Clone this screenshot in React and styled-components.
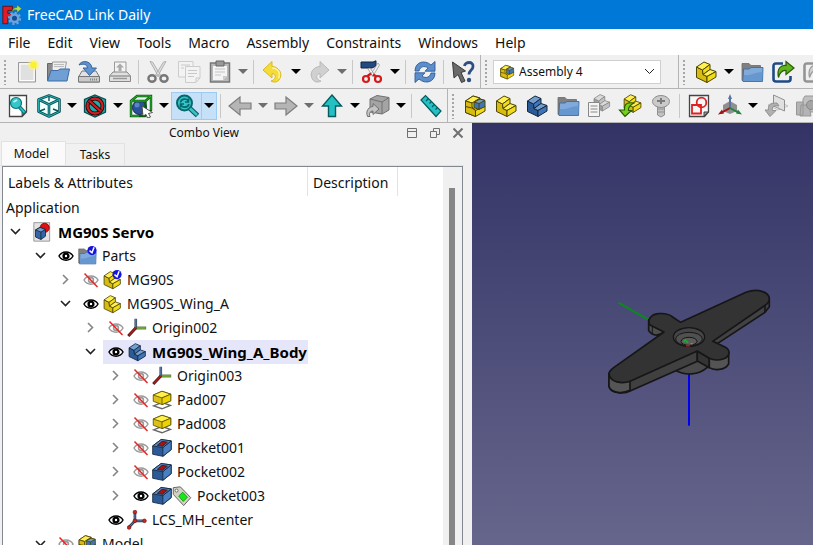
import React, { useState } from 'react';
import styled, { createGlobalStyle, css } from 'styled-components';

const GlobalStyle = createGlobalStyle`
  * { box-sizing: border-box; }
  body { margin: 0; }
  button, select { font: inherit; color: inherit; }
`;

/* ---------- icons ---------- */

const Icon = styled.svg.attrs({ viewBox: '0 0 24 24', 'aria-hidden': true })`
  display: block;
  flex: none;
  width: ${(p) => p.$size || 24}px;
  height: ${(p) => p.$size || 24}px;
`;

const yellow = { top: '#fff04f', left: '#d8bb10', right: '#f0da1c', line: '#4d4400' };
const blue = { top: '#729fcf', left: '#2b5a96', right: '#4076b8', line: '#12263f' };
const pale = { top: '#dadada', left: '#a0a0a0', right: '#c2c2c2', line: '#868686' };

const StepShape = ({ c = yellow }) => (
  <g stroke={c.line} strokeWidth="1" strokeLinejoin="round">
    <path d="M2.500 7 8.500 10 9 14.500 13 16.500V22.500L2.500 17.500Z" fill={c.left} />
    <path d="M2.500 7 10 2 16 4.500 8.500 10Z" fill={c.top} />
    <path d="M8.500 10 16 4.500V9.500L9 14.500Z" fill={c.right} />
    <path d="M9 14.500 16 9.500 22 11.500 13 16.500Z" fill={c.top} />
    <path d="M13 16.500 22 11.500V17L13 22.500Z" fill={c.right} />
  </g>
);

const PartIcon = ({ size, c }) => <Icon $size={size}><StepShape c={c} /></Icon>;

const AssemblyIcon = ({ size }) => (
  <Icon $size={size}>
    <g stroke={yellow.line} strokeWidth="1" strokeLinejoin="round">
      <path d="M2.500 7 10 2 17 4V9L22 12V17L12.500 22.500 2.500 18.500Z" fill={yellow.right} />
      <path d="M2.500 7 10 2 17 4 9 9Z" fill={yellow.top} />
      <path d="M2.500 7 9 9V13L12.500 16V22.500L2.500 18.500Z" fill={yellow.left} />
      <path d="M2.500 12.500 9 14 12.500 16.500 22 12" fill="none" />
      <path d="M11 8 17 5 22 6.500V12.500L16 15.500 11 13.500Z" fill={blue.right} />
      <path d="M11 8 17 5 22 6.500 16 9.500Z" fill={blue.top} />
      <path d="M16 9.500V15.500" />
    </g>
  </Icon>
);

const FolderShape = () => (
  <g>
    <path d="M2 3.500H9l2 2h9.500v15H2Z" fill="#808080" stroke="#6a6a6a" strokeWidth=".8" />
    <path d="M3.500 9H9L11 7.500H23L22.500 21.500H3Z" fill="#7faadb" stroke="#3a6ca8" strokeWidth=".9" />
    <path d="M4 15C11 16 15 12 22.500 12L22 21H3.500Z" fill="#6797cf" />
  </g>
);
const FolderIcon = ({ size }) => <Icon $size={size}><FolderShape /></Icon>;

const Badge = () => (
  <g>
    <circle cx="18" cy="5.500" r="5.500" fill="#1414e0" />
    <path d="M15 5.500 18 8 20.500 1.500" stroke="#fff" strokeWidth="1.800" fill="none" />
  </g>
);
const FolderCheckIcon = ({ size }) => <Icon $size={size}><FolderShape /><Badge /></Icon>;
const PartCheckIcon = ({ size }) => <Icon $size={size}><StepShape /><Badge /></Icon>;

const AppLogo = () => (
  <Icon $size={20}>
    <path d="M1 1.500H12.500V6.500H7V10H11V14.500H7V22.500H1Z" fill="#e01b24" stroke="#5c0a10" />
    <circle cx="15" cy="16" r="6.500" fill="none" stroke="#6ea3dc" strokeWidth="3" strokeDasharray="2.600 2.400" />
    <circle cx="15" cy="16" r="4.500" fill="#0f4f96" stroke="#6ea3dc" strokeWidth="3" />
    <path d="M12 8C13 4 16 3 18 3V0L23.500 4.500 18 9V6C15 5.500 14 6 12 8Z" fill="#b2dc52" stroke="#4e7a06" strokeWidth=".6" />
  </Icon>
);

const NewIcon = () => (
  <Icon>
    <path d="M3.500 2.500H20.500V22H3.500Z" fill="#ebebeb" stroke="#999" />
    <path d="M5 4H19V20.500H5Z" fill="#e0e0e0" stroke="#fff" />
    <circle cx="18.500" cy="5" r="5.500" fill="#fff36b" opacity=".6" />
    <circle cx="18.500" cy="5" r="3.200" fill="#fbf22e" />
  </Icon>
);
const OpenIcon = () => (
  <Icon>
    <path d="M1.500 3.500H8L10 6H17V20H1.500Z" fill="#8a8a8a" stroke="#666" />
    <path d="M6.500 2H20.500L18.500 12H6Z" fill="#eee" stroke="#999" />
    <path d="M8 4.500H18M8 6.500H18" stroke="#bbb" />
    <path d="M5 10.500H12L14 9H23.500L21 21H1.500Z" fill="#6f9fd4" stroke="#3a6ca8" />
  </Icon>
);
const SaveIcon = () => (
  <Icon>
    <path d="M5 11H19L22.500 17V22H1.500V17Z" fill="#e2e2e2" stroke="#777" />
    <path d="M1.500 16.500H22.500V22H1.500Z" fill="#cacaca" stroke="#777" />
    <path d="M2 5C4 0 14 0 15 8H19.500L12.500 15.500 6 8H10.500C10 4 6 3.500 2 5Z" fill="#5f93d0" stroke="#2c5c9a" strokeWidth=".9" />
    <path d="M13 19.500H20" stroke="#888" strokeDasharray="1 1" strokeWidth="2" />
  </Icon>
);
const PrintIcon = () => (
  <Icon>
    <path d="M6.500 2H18V13H6.500Z" fill="#f4f4f4" stroke="#999" />
    <path d="M12 3.500 16 7.500H13.500V11H10.500V7.500H8Z" fill="#aaa" />
    <path d="M5 12H19L22.500 16V21.500H1.500V16Z" fill="#e0e0e0" stroke="#888" />
    <path d="M1.500 16H22.500M5 18.500H19" stroke="#999" strokeWidth="1.500" />
  </Icon>
);
const CutIcon = () => (
  <Icon>
    <path d="M4 1.500 6.500 2 14.500 15 12.500 16.500ZM20 1.500 17.500 2 9.500 15 11.500 16.500Z" fill="#ddd" stroke="#aaa" strokeWidth=".9" />
    <ellipse cx="6" cy="18.500" rx="3.600" ry="3.200" fill="none" stroke="#777" strokeWidth="2.400" />
    <ellipse cx="18" cy="18.500" rx="3.600" ry="3.200" fill="none" stroke="#777" strokeWidth="2.400" />
  </Icon>
);
const CopyIcon = () => (
  <Icon>
    <g fill="#f3f3f3" stroke="#ccc">
      <path d="M1.500 1.500H16V17H1.500Z" />
      <path d="M8.500 6.500H23V18L19 22.500H8.500Z" />
    </g>
    <path d="M4 5H13M4 8H7M11 10.500H20M11 13.500H20M11 16.500H17M19 22V18H23" stroke="#c8c8c8" fill="none" />
  </Icon>
);
const PasteIcon = () => (
  <Icon>
    <path d="M2.500 3H21.500V22H2.500Z" fill="#b9b9b9" stroke="#777" strokeWidth="1.500" />
    <path d="M5 6H19V16L15 20H5Z" fill="#f4f4f4" />
    <path d="M8 1H16V6H8Z" fill="#999" stroke="#666" />
    <path d="M7 9H17M7 12H17M7 15H13" stroke="#c4c4c4" />
    <path d="M15 20V16H19Z" fill="#ccc" />
  </Icon>
);
const UndoIcon = () => (
  <Icon>
    <path d="M2 10 11 1.500V6.500C17 6.500 23 13 18 20 16 22.500 12 22.500 10 21 15 20 16 14 11 13.500V18Z" fill="#f5dc3a" stroke="#d6b311" strokeWidth=".9" />
    <path d="M11 8C17 8 20 13 17.500 18.500" fill="none" stroke="#fff3a0" strokeWidth="1.500" />
  </Icon>
);
const RedoIcon = () => (
  <Icon>
    <path d="M22 10 13 1.500V6.500C7 6.500 1 13 6 20 8 22.500 12 22.500 14 21 9 20 8 14 13 13.500V18Z" fill="#d0d0d0" stroke="#b4b4b4" strokeWidth=".9" />
  </Icon>
);
const ShapeCutIcon = () => (
  <Icon>
    <path d="M1 2H13L16 .8V6L12 8H1Z" fill="#224a80" stroke="#0f2747" />
    <path d="M18 3 19.500 5 13 16 11 14ZM8 9 10 8 15 15 13 17Z" fill="#f2f2f2" stroke="#999" strokeWidth=".8" />
    <path d="M11 13.500 7.500 16M13 14.500 16.500 16.500" stroke="#d41b1b" strokeWidth="2.400" />
    <ellipse cx="6" cy="19" rx="3" ry="3" fill="none" stroke="#d41b1b" strokeWidth="2.200" />
    <ellipse cx="18" cy="19" rx="3" ry="3" fill="none" stroke="#d41b1b" strokeWidth="2.200" />
  </Icon>
);
const RefreshIcon = () => (
  <Icon>
    <g fill="#5b8ecb" stroke="#2c5c9a" strokeWidth=".9" strokeLinejoin="round">
      <path d="M2 11C2 1.500 12-.5 18 5L22 1.500V11.200H12L15 8C11 5 7 7 6 11Z" />
      <path d="M22 13C22 22.500 12 24.500 6 19L2 22.500V12.800H12L9 16C13 19 17 17 18 13Z" />
    </g>
  </Icon>
);
const WhatsThisIcon = () => (
  <Icon>
    <path d="M1.500 2 14.500 11 10 12.500 14 21 10.500 22.500 7 14.500 3 18Z" fill="#6a6a6a" stroke="#3a3a3a" />
    <path d="M13.500 6C14 1.500 22.500 1 22 6.500 22 10 18 10 18 14.500" fill="none" stroke="#2f4f84" strokeWidth="2.800" />
    <circle cx="18" cy="20" r="2.200" fill="#2f4f84" />
  </Icon>
);
const FitAllIcon = () => (
  <Icon>
    <path d="M3.500 1.500H20.500V18L16 22.500H3.500Z" fill="#fff" stroke="#444" strokeWidth="1.300" />
    <path d="M16 22V18H20Z" fill="#888" stroke="#333" strokeWidth=".8" />
    <circle cx="10" cy="9" r="5.500" fill="#34c6c8" stroke="#06747a" strokeWidth="1.200" />
    <path d="M13.500 13 19 19" stroke="#06747a" strokeWidth="3.800" />
    <path d="M14 13.500 18.500 18.500" stroke="#34c6c8" strokeWidth="1.600" />
    <path d="M7.500 8 11 6" stroke="#c8f5f5" strokeWidth="1.500" />
  </Icon>
);
const CubeIcon = () => (
  <Icon>
    <g fill="none" stroke="#0b5356" strokeWidth="2.600" strokeLinejoin="round">
      <path d="M12 1.500 22.500 5.500V17.500L12 22.500 1.500 17.500V5.500Z" fill="#f0ffff" />
      <path d="M1.500 5.500 12 10.500 22.500 5.500M12 10.500V22.500" />
    </g>
    <g fill="none" stroke="#2fb9bc" strokeWidth=".9">
      <path d="M12 1.500 22.500 5.500V17.500L12 22.500 1.500 17.500V5.500ZM1.500 5.500 12 10.500 22.500 5.500M12 10.500V22.500" />
      <path d="M3 17 8 15M21 17 16 15M12 3V7" stroke="#0b5356" strokeWidth="1.400" />
    </g>
  </Icon>
);
const DrawStyleIcon = () => (
  <Icon>
    <path d="M12 1 22.500 5.500V18L12 23 1.500 18V5.500Z" fill="#22a9ad" stroke="#044d50" strokeWidth="1.300" />
    <circle cx="12" cy="12" r="7.500" fill="none" stroke="#280000" strokeWidth="4" />
    <circle cx="12" cy="12" r="7.500" fill="none" stroke="#cc1f1f" strokeWidth="2.300" />
    <path d="M6.500 7 17.500 17" stroke="#280000" strokeWidth="4" />
    <path d="M6.500 7 17.500 17" stroke="#cc1f1f" strokeWidth="2.300" />
  </Icon>
);
const BoundBoxIcon = () => (
  <Icon>
    <path d="M2 7 8 2H22V16L16 22H2Z" fill="#eef" stroke="#0a5c0a" strokeWidth="2.400" />
    <circle cx="10.500" cy="13.500" r="7" fill="#2a5298" stroke="#10264a" />
    <circle cx="8" cy="11" r="2.500" fill="#5a86c8" />
    <path d="M2 7H16.500L22 2M16.500 7V21" fill="none" stroke="#0a5c0a" strokeWidth="2.400" />
    <path d="M2 7 8 2H22V16M2 7H16.500L22 2M2 7V22H10" fill="none" stroke="#33c433" strokeWidth=".9" />
    <path d="M13 12 23.500 18.500 19.500 19.500 21.500 23 18.500 24 17 20.500 14 22Z" fill="#fff" stroke="#444" strokeWidth=".9" />
  </Icon>
);
const ZoomIcon = () => (
  <Icon>
    <circle cx="9.500" cy="9" r="7.500" fill="#35c3c5" stroke="#05686c" strokeWidth="2" />
    <path d="M15 14.500 22.500 21.500" stroke="#055c60" strokeWidth="5" />
    <path d="M15 14.500 22 21" stroke="#35c3c5" strokeWidth="2.800" />
    <path d="M5.500 8.500C6 4.500 12 4 13 7M13.500 4.500V8H10M14 10C13 14 7 14 6 11M5.500 13.500V10H9" fill="none" stroke="#05686c" strokeWidth="1.600" />
  </Icon>
);
const ArrowLeftIcon = () => (
  <Icon><path d="M1 12 12 3V9H23V15H12V21Z" fill="#b5b5b5" stroke="#7e7e7e" strokeWidth="1.200" /></Icon>
);
const ArrowRightIcon = () => (
  <Icon><path d="M23 12 12 3V9H1V15H12V21Z" fill="#b5b5b5" stroke="#7e7e7e" strokeWidth="1.200" /></Icon>
);
const ArrowUpIcon = () => (
  <Icon><path d="M12 1 21.500 12H15.500V22.500H8.500V12H2.500Z" fill="#24c1c4" stroke="#055c60" strokeWidth="1.400" /></Icon>
);
const LinkBoxIcon = () => (
  <Icon>
    <g stroke="#707070" strokeLinejoin="round">
      <path d="M4 5 11 1.500 23 3.500V16L16 20 4 18Z" fill="#a4a4a4" />
      <path d="M4 5 16 8 23 3.500M16 8V20" fill="none" />
      <path d="M1.500 22.500C-1 16 4 12.500 7 12.500V9.500L13 15 7 20.500V17C4.500 17 2.500 19 4 22.500Z" fill="#c4c4c4" />
    </g>
  </Icon>
);
const RulerIcon = () => (
  <Icon>
    <path d="M2 6 6.500 1.500 22 17 17 22.500Z" fill="#26c0c4" stroke="#055c60" strokeWidth="1.200" />
    <path d="M9.500 4.500 7 7M12.500 7.500 10.500 9.500M15.500 10.500 13 13M18.500 13.500 16.500 15.500" stroke="#055c60" strokeWidth="1.200" />
  </Icon>
);
const VariantIcon = () => (
  <Icon>
    <g transform="translate(5 -1) scale(.8)"><StepShape c={pale} /></g>
    <path d="M1.500 8.500H12.500V22.500H1.500Z" fill="#f4f4f4" stroke="#888" />
    <path d="M3.500 12H10.500M3.500 15H10.500M3.500 18H10.500" stroke="#888" />
  </Icon>
);
const ImportPartIcon = () => (
  <Icon>
    <g transform="translate(4 -1) scale(.86)"><StepShape /></g>
    <path d="M16 9C9 8 6 10 6.500 16H1.500L7 22.500 13.500 16.500H10.500C10 13 12 11 16 9Z" fill="#73d216" stroke="#2a5c03" strokeWidth="1.200" />
  </Icon>
);
const ScrewIcon = () => (
  <Icon>
    <path d="M8.500 11H15.500V21L12 23 8.500 21Z" fill="#c2c2c2" stroke="#909090" />
    <path d="M8.500 15H15.500M8.500 18H15.500" stroke="#909090" />
    <ellipse cx="12" cy="7.500" rx="8.500" ry="6" fill="#cacaca" stroke="#8c8c8c" />
    <path d="M8 7H16M12 4V10" stroke="#7c7c7c" strokeWidth="2" />
  </Icon>
);
const SketchIcon = () => (
  <Icon>
    <path d="M2.500 1.500H21.500V18L17.500 22.500H2.500Z" fill="#f6f6f6" stroke="#444" strokeWidth="1.300" />
    <path d="M17 22V18H21.500Z" fill="#999" stroke="#444" />
    <circle cx="14.500" cy="8.500" r="4.800" fill="none" stroke="#dd2222" strokeWidth="1.800" />
    <path d="M5 11H14V19.500H5Z" fill="none" stroke="#dd2222" strokeWidth="1.800" />
  </Icon>
);
const AxesIcon = () => (
  <Icon>
    <path d="M12 7 19 11V17L12 20 5 17V11Z" fill="#777" opacity=".8" />
    <path d="M12 3V14" stroke="#5a72a5" strokeWidth="2" />
    <path d="M12 14 3 19" stroke="#a11414" strokeWidth="2" />
    <path d="M12 14 21 19" stroke="#21843f" strokeWidth="2" />
    <path d="M12 0 14 5H10Z" fill="#5a72a5" />
    <path d="M0 20.500 4 15.500 6 19.500Z" fill="#a11414" />
    <path d="M24 20.500 20 15.500 18 19.500Z" fill="#21843f" />
  </Icon>
);
const PlaneIcon = () => (
  <Icon>
    <g fill="#e0e0e0" stroke="#909090">
      <path d="M4 11 14 7 24 12 14 16Z" fill="none" stroke="#c0c0c0" />
      <path d="M9.500 1 20.500 6V17L9.500 12Z" />
      <path d="M13 9C5 9 4 12 4.500 16H1L6 22.500 12 16.500H8.500C8 13 9 11 15 12Z" fill="#b0b0b0" />
    </g>
  </Icon>
);
const CameraIcon = () => (
  <Icon>
    <path d="M8 5 10 2H18L20 5H24V18H8Z" fill="#c0c0c0" stroke="#989898" />
    <path d="M1.500 8H8V21H1.500ZM6 11H14L16 22H5Z" fill="#b4b4b4" stroke="#989898" />
    <circle cx="16" cy="11" r="4.500" fill="#a4a4a4" stroke="#888" />
  </Icon>
);
const ExportIcon = ({ edge = '#204a87', fill = '#5fb41e', line = '#2a5c03' }) => (
  <Icon>
    <path d="M12 3.500H5Q2.500 3.500 2.500 6V19Q2.500 21.500 5 21.500H17Q19.500 21.500 19.500 19V16" fill="none" stroke={edge} strokeWidth="2.600" />
    <path d="M7.500 17.500C5.500 8 10 5 15 5.500V1.500L23 8 15 14.500V10.500C11 10 9 12 7.500 17.500Z" fill={fill} stroke={line} strokeWidth="1.200" />
  </Icon>
);
const ExportPaleIcon = () => <ExportIcon edge="#949494" fill="#d0d0d0" line="#999" />;
const BodyIcon = ({ size }) => <PartIcon size={size} c={blue} />;

const DocumentIcon = ({ size }) => (
  <Icon $size={size}>
    <path d="M1 .8H20V23H1Z" fill="#e4e4e4" stroke="#8c8c8c" />
    <circle cx="14" cy="7" r="5.500" fill="#dd1111" stroke="#8d0000" />
    <path d="M3 9.500 8.500 6.500 15 9V17L9.500 21 3 18Z" fill="#3465a4" stroke="#12263f" />
    <path d="M3 9.500 8.500 6.500 15 9 9.500 12Z" fill="#729fcf" stroke="#12263f" />
    <path d="M9.500 12V21" stroke="#12263f" />
  </Icon>
);
const OriginIcon = ({ size }) => (
  <Icon $size={size}>
    <path d="M10.500 1V12" stroke="#3d4c66" strokeWidth="3.200" />
    <path d="M10.500 1V12" stroke="#5a78a5" strokeWidth="1.400" />
    <path d="M10.500 12H23" stroke="#3c6122" strokeWidth="3.400" />
    <path d="M12 12H22.500" stroke="#86c440" strokeWidth="1.600" />
    <path d="M10.500 12 1.500 21.500" stroke="#4c0d0d" strokeWidth="3.600" />
    <path d="M10.500 12 2 21" stroke="#a82020" strokeWidth="2" />
  </Icon>
);
const LcsIcon = ({ size }) => (
  <Icon $size={size}>
    <path d="M9.500 3V13M9.500 13H21M9.500 13 2 21" stroke="#2c405e" strokeWidth="3.200" />
    <path d="M9.500 3V13M9.500 13H21M9.500 13 2 21" stroke="#6a86ad" strokeWidth="1" />
    <g fill="#c92828" stroke="#7a0f0f" strokeWidth=".8">
      <circle cx="9.500" cy="2.500" r="2.200" /><circle cx="9.500" cy="13" r="2.200" />
      <circle cx="21" cy="13" r="2.200" /><circle cx="2.500" cy="21" r="2.200" />
    </g>
  </Icon>
);
const PadIcon = ({ size }) => (
  <Icon $size={size}>
    <path d="M2 19 12 15 22 18.500 12 22.500Z" fill="#fff" stroke="#666" strokeWidth="1.600" />
    <g stroke="#5c5000" strokeLinejoin="round">
      <path d="M1.500 6 12 1.500 22.500 5V13L12 17.500 1.500 13.500Z" fill="#dcc015" />
      <path d="M1.500 6 12 1.500 22.500 5 12 9.500Z" fill="#fff04a" />
      <path d="M12 9.500 22.500 5V13L12 17.500Z" fill="#edd400" />
    </g>
  </Icon>
);
const PocketIcon = ({ size }) => (
  <Icon $size={size}>
    <g stroke="#12263f" strokeLinejoin="round">
      <path d="M.8 9.500 11 1.800 23 3.500V14L13 22 .8 19.500Z" fill="#2b5a96" />
      <path d="M13 11.500 23 3.500V14L13 22Z" fill="#4a80c2" />
      <path d="M.8 9.500 11 1.800 23 3.500 13 11.500Z" fill="#5b87bd" />
      <path d="M6.500 8.800 12 4 18.500 5 12.500 10Z" fill="#b40d0d" />
    </g>
  </Icon>
);
const TagIcon = ({ size }) => (
  <Icon $size={size}>
    <path d="M1.500 2 10 1 22.500 14 14 23.500 1.500 10Z" fill="#d2d2c4" stroke="#666" strokeWidth="1.200" />
    <circle cx="5.500" cy="5.500" r="1.800" fill="#fff" stroke="#555" />
    <path d="M8 12 13 7.500 18.500 13.500 13.500 18.500Z" fill="#17e817" stroke="#0a950a" />
  </Icon>
);

const EyeSvg = styled.svg`
  display: block;
  width: 16px;
  height: 16px;
`;
const Eye = ({ open }) => (
  <EyeSvg viewBox="0 0 16 16" aria-hidden="true">
    <g stroke={open ? '#000' : '#9a9a9a'} fill="none">
      <path d="M1 8C4 2.500 12 2.500 15 8 12 13.500 4 13.500 1 8Z" strokeWidth="1.500" fill="#fff" />
      <circle cx="8" cy="8" r="2.400" strokeWidth={open ? 2.4 : 1.6} />
    </g>
    {!open && <path d="M1.500 1.500 14.500 15" stroke="#f02020" strokeWidth="1.500" />}
  </EyeSvg>
);

/* ---------- window frame ---------- */

const Window = styled.div`
  display: flex;
  flex-direction: column;
  height: 100vh;
  overflow: hidden;
  background: #f0f0f0;
  color: #111;
  font: 14px/20px 'Noto Sans', 'Open Sans', sans-serif;
`;

const TitleBar = styled.header`
  display: flex;
  flex: none;
  align-items: center;
  gap: 5px;
  height: 29px;
  padding: 0 2px;
  background: #0078d7;
  color: #fff;
`;

const MenuBar = styled.nav`
  display: flex;
  flex: none;
  gap: 1px;
  height: 26px;
  background: #fff;
`;

const MenuButton = styled.button`
  padding: 1px 8px 0;
  border: 0;
  background: none;
  white-space: nowrap;
  &:hover { background: #e5f3ff; }
`;

const ToolRow = styled.div`
  display: flex;
  flex: none;
  height: 34px;
  overflow: hidden;
  border-bottom: 1px solid #b4b4b4;
`;

const ToolBar = styled.div`
  display: flex;
  flex: ${(p) => (p.$last ? '1 0 auto' : 'none')};
  align-items: center;
  padding: 0 ${(p) => p.$end || 0}px 0 ${(p) => p.$start || 0}px;
  border-right: ${(p) => (p.$last ? '0' : '1px solid #b4b4b4')};
`;

const Grip = styled.span`
  flex: none;
  width: 11px;
  height: 26px;
  background: radial-gradient(circle, #a6a6a6 1px, transparent 1px) 3px 0 / 4px 4px repeat-y;
`;

const Separator = styled.span`
  flex: none;
  width: 1px;
  height: 24px;
  margin: 0 3px;
  background: #c8c8c8;
`;

const ToolButton = styled.button`
  display: flex;
  flex: none;
  align-items: center;
  justify-content: center;
  width: ${(p) => (p.$drop ? 15 : 31)}px;
  height: 28px;
  padding: 0;
  border: 1px solid transparent;
  background: none;
  ${(p) => p.$pressed && css`
    border-color: #9accf5;
    background: #c5e0f7;
    ${p.$drop && css`border-left: 0;`}
  `}
`;

const DropArrow = styled.span`
  border: 5px solid transparent;
  border-top-color: ${(p) => (p.$dim ? '#6e6e6e' : '#000')};
  border-bottom: 0;
`;

const WorkbenchBox = styled.label`
  display: flex;
  align-items: center;
  width: 168px;
  height: 24px;
  margin: 0 17px 0 1px;
  padding: 0 5px;
  gap: 4px;
  border: 1px solid #d0d0d0;
  background: #fff;
  font-size: 12px;
`;

const WorkbenchSelect = styled.select`
  flex: 1;
  min-width: 0;
  padding: 0;
  border: 0;
  outline: 0;
  appearance: none;
  background: none;
`;

const ChevronSvg = styled.svg`
  display: block;
  width: 11px;
  height: 11px;
  fill: none;
  stroke: ${(p) => (p.$dim ? '#858585' : '#222')};
  stroke-width: ${(p) => (p.$thin ? 1 : 1.6)};
`;
const Chevron = ({ open, thin, dim }) => (
  <ChevronSvg viewBox="0 0 11 11" $dim={dim} $thin={thin} aria-hidden="true">
    <path d={open ? 'M1 3 5.500 7.500 10 3' : 'M3 1 7.500 5.500 3 10'} />
  </ChevronSvg>
);

/* ---------- dock ---------- */

const Body = styled.div`
  display: flex;
  flex: 1;
  min-height: 0;
`;

const Dock = styled.aside`
  display: flex;
  flex: none;
  flex-direction: column;
  width: 472px;
  padding-right: 8px;
`;

const DockTitle = styled.div`
  display: flex;
  flex: none;
  align-items: center;
  height: 19px;
  font-size: 12px;
`;

const DockName = styled.span`
  flex: 1;
  padding-left: 8px;
  text-align: center;
`;

const DockButton = styled.button`
  display: flex;
  align-items: center;
  justify-content: center;
  width: 23px;
  height: 18px;
  padding: 0;
  border: 0;
  background: none;
  svg { width: 12px; height: 12px; fill: none; stroke: #707070; }
`;

const DockButtons = styled.div`
  display: flex;
  margin-right: -5px;
`;

const Tabs = styled.div`
  display: flex;
  flex: none;
  align-items: flex-end;
  height: 24px;
  padding-left: 1px;
  border-bottom: 1px solid #e2e2e2;
  font-size: 12px;
`;

const Tab = styled.button`
  width: ${(p) => (p.$active ? 65 : 59)}px;
  height: ${(p) => (p.$active ? 24 : 22)}px;
  padding: 0 4px 0 0;
  border: 1px solid #e2e2e2;
  border-bottom: 0;
  border-left-width: ${(p) => (p.$active ? 1 : 0)}px;
  background: ${(p) => (p.$active ? '#fafafa' : '#f1f1f1')};
  &:last-child { padding-right: 0; }
`;

const TreePane = styled.div`
  display: flex;
  flex: 1;
  min-height: 0;
  margin: 0 1px 0 2px;
  border: 1px solid #828790;
  border-bottom: 0;
  background: #fff;
`;

const TreeContent = styled.div`
  flex: 1;
  min-width: 0;
  overflow: hidden;
`;

const TreeHeader = styled.div`
  display: flex;
  height: 29px;
  line-height: 32px;
`;

const HeaderCell = styled.span`
  width: ${(p) => p.$width}px;
  padding-left: 5px;
  border-right: 1px solid #dfe4e6;
`;

const ScrollTrack = styled.div`
  flex: none;
  width: 19px;
  padding: 21px 7px 0 6px;
  background: #f0f0f0;
`;

const ScrollThumb = styled.div`
  height: 100%;
  background: #868686;
`;

const TreeRow = styled.div`
  display: flex;
  align-items: center;
  height: 24px;
  padding-left: ${(p) => p.$level * 25}px;
`;

const RootLabel = styled.div`
  height: 24px;
  padding-left: 3px;
  line-height: 24px;
`;

const Expander = styled.button`
  display: flex;
  flex: none;
  align-items: center;
  justify-content: center;
  width: 25px;
  height: 24px;
  padding: 0 1px 2px 0;
  border: 0;
  background: none;
`;

const NodeBody = styled.div`
  display: flex;
  align-items: center;
  height: 24px;
  padding: 0 1px 0 5px;
  background: ${(p) => (p.$selected ? '#e6e6fa' : 'none')};
  ${(p) => p.$bold && css`font-size: 15px; font-weight: 700; color: #000;`}
`;

const EyeButton = styled.button`
  margin-right: 3px;
  padding: 0;
  border: 0;
  background: none;
`;

const NodeLabel = styled.span`
  padding-left: 5px;
  line-height: 22px;
  white-space: nowrap;
`;

/* ---------- 3D view ---------- */

const Viewport = styled.main`
  flex: 1;
  min-width: 0;
  overflow: hidden;
  background: linear-gradient(#333366, #66668c);
`;

const Scene = styled.svg`
  display: block;
  width: 341px;
  height: 422px;
`;

const ServoWing = () => (
  <Scene viewBox="0 0 341 422" role="img" aria-label="Servo wing model">
    <g transform="translate(118 147) scale(.3333)" stroke="#161618" strokeWidth="5" strokeLinejoin="round">
      <path d="M85 98 180 152" stroke="#0b8a1c" strokeWidth="6" />
      <path d="M297 310V467" stroke="#0000f0" strokeWidth="6" />
      <path d="M255 300C285 318 325 316 352 292V262H255Z" fill="#4a4a4a" />
      <path d="M176 150V182C185 196 205 201 222 186Z" fill="#4d4d4d" />
      <path d="M187 163V192" fill="none" strokeWidth="3" />
      <path d="M538 88V110L525 127 382 221 366 214 525 106Z" fill="#424242" />
      <path d="M525 106V127" fill="none" />
      <path d="M57 310V350C65 372 103 373 122 362L322 274V243Z" fill="#404040" />
      <path d="M57 312V350C65 370 98 372 120 361V334Z" fill="#555" />
      <path d="M322 243 358 265V293L322 273Z" fill="#343434" />
      <path d="M358 265V293C372 302 404 302 416 282V248Z" fill="#545454" />
      <path d="M57 310C58 304 65 297 72 292L222 186 180 165C170 150 183 133 205 131 225 129 237 132 248 141L272 157 468 67C505 53 536 67 538 85 538 95 533 102 525 106L368 214 405 231C424 241 418 260 402 266 385 272 368 270 358 265L322 243 122 333C97 343 59 338 57 310Z" fill="#333" />
      <ellipse cx="297" cy="201" rx="47" ry="28" fill="#454545" strokeWidth="4" />
      <ellipse cx="297" cy="207" rx="40" ry="20" fill="#505050" strokeWidth="3" />
      <ellipse cx="297" cy="214" rx="24" ry="12" fill="#5c5c5c" strokeWidth="3" />
      <path d="M281 216 286 210 294 219" fill="none" stroke="#14b02c" />
      <path d="M288 227H300" stroke="#c01818" />
      <path d="M302 221H308" stroke="#d66" strokeWidth="4" />
    </g>
  </Scene>
);

/* ---------- data ---------- */

const SEP = 'separator';
const tool = (label, icon, drop, pressed) => ({ label, icon, drop, pressed });

const fileTools = [
  tool('New', NewIcon), tool('Open', OpenIcon), tool('Save', SaveIcon), tool('Print', PrintIcon), SEP,
  tool('Cut', CutIcon), tool('Copy', CopyIcon), tool('Paste', PasteIcon, 'dim'), SEP,
  tool('Undo', UndoIcon, 'on'), tool('Redo', RedoIcon, 'dim'), SEP,
  tool('Cut shape', ShapeCutIcon, 'on'), SEP, tool('Refresh', RefreshIcon), SEP, tool("What's this?", WhatsThisIcon),
];
const structureTools = [
  tool('Create part', PartIcon, 'on'), tool('Create group', FolderIcon),
  tool('Make link', ExportIcon), tool('Make sub-link', ExportPaleIcon),
];
const viewTools = [
  tool('Fit all', FitAllIcon), tool('Axonometric', CubeIcon, 'on'), tool('Draw style', DrawStyleIcon, 'on'),
  tool('Bounding box', BoundBoxIcon, 'on'), tool('Zoom', ZoomIcon, 'on', true), SEP,
  tool('Back', ArrowLeftIcon, 'dim'), tool('Forward', ArrowRightIcon, 'dim'), tool('Up', ArrowUpIcon, 'on'),
  tool('Linked object', LinkBoxIcon, 'on'), SEP, tool('Measure', RulerIcon),
];
const assemblyTools = [
  tool('New assembly', AssemblyIcon), tool('New part', PartIcon), tool('New body', BodyIcon),
  tool('New group', FolderIcon), tool('Variant', VariantIcon), tool('Import part', ImportPartIcon),
  tool('Insert fastener', ScrewIcon), SEP, tool('New sketch', SketchIcon), tool('New datum', AxesIcon, 'on'),
  tool('Import datum', PlaneIcon), tool('Shape binder', CameraIcon),
];

const menus = ['File', 'Edit', 'View', 'Tools', 'Macro', 'Assembly', 'Constraints', 'Windows', 'Help'];

const nodes = [
  { level: 0, name: 'MG90S Servo', icons: [DocumentIcon], state: 'open', bold: true },
  { level: 1, name: 'Parts', icons: [FolderCheckIcon], state: 'open', visible: true },
  { level: 2, name: 'MG90S', icons: [PartCheckIcon], state: 'closed', visible: false },
  { level: 2, name: 'MG90S_Wing_A', icons: [PartIcon], state: 'open', visible: true },
  { level: 3, name: 'Origin002', icons: [OriginIcon], state: 'closed', visible: false },
  { level: 3, name: 'MG90S_Wing_A_Body', icons: [BodyIcon], state: 'open', visible: true, bold: true, selected: true },
  { level: 4, name: 'Origin003', icons: [OriginIcon], state: 'closed', visible: false },
  { level: 4, name: 'Pad007', icons: [PadIcon], state: 'closed', visible: false },
  { level: 4, name: 'Pad008', icons: [PadIcon], state: 'closed', visible: false },
  { level: 4, name: 'Pocket001', icons: [PocketIcon], state: 'closed', visible: false },
  { level: 4, name: 'Pocket002', icons: [PocketIcon], state: 'closed', visible: false },
  { level: 4, name: 'Pocket003', icons: [PocketIcon, TagIcon], state: 'closed', visible: true },
  { level: 3, name: 'LCS_MH_center', icons: [LcsIcon], visible: true },
  { level: 1, name: 'Model', icons: [AssemblyIcon], state: 'open', visible: false },
];

/* ---------- composed parts ---------- */

const Tools = ({ items }) => items.map((item, i) => {
  if (item === SEP) return <Separator key={i} />;
  const Glyph = item.icon;
  return (
    <React.Fragment key={item.label}>
      <ToolButton aria-label={item.label} $pressed={item.pressed}><Glyph /></ToolButton>
      {item.drop && (
        <ToolButton aria-label={`${item.label} options`} $drop $pressed={item.pressed}>
          <DropArrow $dim={item.drop === 'dim'} />
        </ToolButton>
      )}
    </React.Fragment>
  );
});

const TreeNode = ({ node }) => {
  const [visible, setVisible] = useState(node.visible);
  return (
    <TreeRow $level={node.level} role="treeitem" aria-level={node.level + 1} aria-selected={!!node.selected}>
      <Expander aria-label={`Toggle ${node.name}`} disabled={!node.state}>
        {node.state && <Chevron open={node.state === 'open'} dim={node.state === 'closed'} />}
      </Expander>
      <NodeBody $selected={node.selected} $bold={node.bold}>
        {visible !== undefined && (
          <EyeButton aria-label={`Show ${node.name}`} aria-pressed={visible} onClick={() => setVisible(!visible)}>
            <Eye open={visible} />
          </EyeButton>
        )}
        {node.icons.map((Glyph, i) => <Glyph key={i} size={20} />)}
        <NodeLabel>{node.name}</NodeLabel>
      </NodeBody>
    </TreeRow>
  );
};

export default function App() {
  const [tab, setTab] = useState('Model');
  return (
    <Window>
      <GlobalStyle />
      <TitleBar><AppLogo /><span>FreeCAD Link Daily</span></TitleBar>
      <MenuBar>{menus.map((m) => <MenuButton key={m}>{m}</MenuButton>)}</MenuBar>
      <ToolRow>
        <ToolBar $end={2}><Grip /><Tools items={fileTools} /></ToolBar>
        <ToolBar>
          <Grip />
          <WorkbenchBox>
            <AssemblyIcon size={16} />
            <WorkbenchSelect aria-label="Workbench"><option>Assembly 4</option></WorkbenchSelect>
            <Chevron open thin />
          </WorkbenchBox>
        </ToolBar>
        <ToolBar $last><Grip /><Tools items={structureTools} /></ToolBar>
      </ToolRow>
      <ToolRow>
        <ToolBar $start={2} $end={1}><Tools items={viewTools} /></ToolBar>
        <ToolBar $last><Grip /><Tools items={assemblyTools} /></ToolBar>
      </ToolRow>
      <Body>
        <Dock>
          <DockTitle>
            <DockName>Combo View</DockName>
            <DockButtons>
              <DockButton aria-label="Collapse"><svg viewBox="0 0 12 12"><path d="M1.500 1.500H10.500V10.500H1.500ZM1.500 4.500H10.500" /></svg></DockButton>
              <DockButton aria-label="Float"><svg viewBox="0 0 12 12"><path d="M4.500 4.500V1.500H10.500V7.500H7.500M1.500 4.500H7.500V10.500H1.500Z" /></svg></DockButton>
              <DockButton aria-label="Close"><svg viewBox="0 0 12 12"><path d="M1.500 1.500 10.500 10.500M10.500 1.500 1.500 10.500" strokeWidth="2" /></svg></DockButton>
            </DockButtons>
          </DockTitle>
          <Tabs role="tablist">
            {['Model', 'Tasks'].map((t) => (
              <Tab key={t} role="tab" aria-selected={tab === t} $active={tab === t} onClick={() => setTab(t)}>{t}</Tab>
            ))}
          </Tabs>
          <TreePane>
            <TreeContent>
              <TreeHeader>
                <HeaderCell $width={305}>Labels &amp; Attributes</HeaderCell>
                <HeaderCell $width={90}>Description</HeaderCell>
              </TreeHeader>
              <RootLabel>Application</RootLabel>
              <div role="tree">{nodes.map((n) => <TreeNode key={n.name} node={n} />)}</div>
            </TreeContent>
            <ScrollTrack><ScrollThumb /></ScrollTrack>
          </TreePane>
        </Dock>
        <Viewport><ServoWing /></Viewport>
      </Body>
    </Window>
  );
}
